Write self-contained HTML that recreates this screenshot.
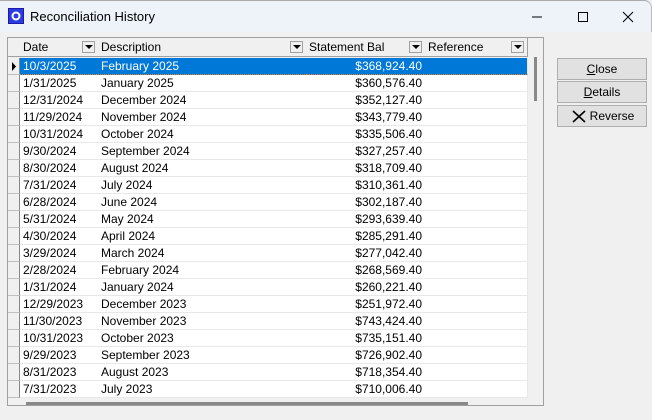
<!DOCTYPE html>
<html><head><style>
*{margin:0;padding:0;box-sizing:border-box}
body{width:652px;height:420px;overflow:hidden;background:#f0f0f0;font-family:"Liberation Sans",sans-serif;font-size:12px;position:relative}
.title{position:absolute;left:0;top:0;width:652px;height:32px;background:#eef2f9;border-top:1px solid #aaa;border-right:1px solid #bbb;border-radius:0 8px 0 0}
.title .t{position:absolute;left:30px;top:8px;font-size:13px;color:#000}
.grid{position:absolute;left:7px;top:37px;width:537px;height:369px;border:1px solid #a0a0a0;background:#f0f0f0;overflow:hidden}
.hdr{position:absolute;top:0;height:19px;background:#f0f0f0;border-right:1px solid #a0a0a0;border-bottom:1px solid #a0a0a0;padding-left:3px;line-height:18px}
.dd{position:absolute;right:3px;top:3px;width:13px;height:12px;border:1px solid #a0a0a0;background:#f0f0f0}
.dd:after{content:"";position:absolute;left:2px;top:3px;border-left:4px solid transparent;border-right:4px solid transparent;border-top:4px solid #000}
.row{position:absolute;left:0;height:17px;width:519px}
.ind{position:absolute;left:0;top:0;width:12px;height:17px;background:#f0f0f0;border-right:1px solid #888;border-bottom:1px solid #c0c0c0}
.c{position:absolute;top:0;height:17px;line-height:16px;background:#fff;border-right:1px solid #e8e8e8;border-bottom:1px solid #e8e8e8;padding-left:3px;white-space:nowrap}
.sel .c{background:#0078d7;color:#fff;border-bottom:1px dotted #f08020}
.r{text-align:right;padding-right:3px}
.btn{position:absolute;left:557px;width:90px;height:22px;background:#e1e1e1;border:1px solid #adadad;text-align:center;line-height:20px}
</style></head><body>
<div class="title">
<svg style="position:absolute;left:8px;top:7px" width="16" height="16"><rect x="0" y="0" width="16" height="16" fill="#1a1aa8"/><rect x="1" y="1" width="14" height="14" fill="#2b3be0"/><circle cx="8" cy="8" r="4.5" fill="#fff"/><circle cx="8" cy="8" r="2.5" fill="#2b3be0"/></svg>
<span class="t">Reconciliation History</span>
<svg style="position:absolute;left:531px;top:10px" width="110" height="12"><line x1="1" y1="6" x2="11" y2="6" stroke="#000"/><rect x="47.5" y="1.5" width="9" height="9" fill="none" stroke="#000"/><path d="M92 1L102 11M102 1L92 11" stroke="#000"/></svg>
</div>
<div class="grid">
<div class="hdr" style="left:0;width:13px"></div>
<div class="hdr" style="left:12px;width:79px">Date<span class="dd"></span></div>
<div class="hdr" style="left:90px;width:209px">Description<span class="dd"></span></div>
<div class="hdr" style="left:298px;width:120px">Statement Bal<span class="dd"></span></div>
<div class="hdr" style="left:417px;width:103px">Reference<span class="dd"></span></div>
<div id="rows"></div>
<div style="position:absolute;left:526px;top:19px;width:3px;height:44px;background:#888"></div>
<div style="position:absolute;left:18px;top:364px;width:442px;height:3px;background:#888"></div>
</div>
<div class="btn" style="top:58px"><u>C</u>lose</div>
<div class="btn" style="top:81px"><u>D</u>etails</div>
<div class="btn" style="top:105px"><svg style="position:absolute;left:14px;top:4px" width="14" height="13"><path d="M1 1L13 12M13 1L1 12" stroke="#000" stroke-width="1.6"/></svg><span style="padding-left:20px">Reverse</span></div>
<script>
var d=[["10/3/2025","February 2025","$368,924.40"],["1/31/2025","January 2025","$360,576.40"],["12/31/2024","December 2024","$352,127.40"],["11/29/2024","November 2024","$343,779.40"],["10/31/2024","October 2024","$335,506.40"],["9/30/2024","September 2024","$327,257.40"],["8/30/2024","August 2024","$318,709.40"],["7/31/2024","July 2024","$310,361.40"],["6/28/2024","June 2024","$302,187.40"],["5/31/2024","May 2024","$293,639.40"],["4/30/2024","April 2024","$285,291.40"],["3/29/2024","March 2024","$277,042.40"],["2/28/2024","February 2024","$268,569.40"],["1/31/2024","January 2024","$260,221.40"],["12/29/2023","December 2023","$251,972.40"],["11/30/2023","November 2023","$743,424.40"],["10/31/2023","October 2023","$735,151.40"],["9/29/2023","September 2023","$726,902.40"],["8/31/2023","August 2023","$718,354.40"],["7/31/2023","July 2023","$710,006.40"]];
var h="";d.forEach(function(r,i){h+='<div class="row'+(i==0?' sel':'')+'" style="top:'+(20+i*17)+'px"><div class="ind">'+(i==0?'<svg width="12" height="17"><path d="M4 4L8 8.5L4 13Z" fill="#000"/></svg>':'')+'</div><div class="c" style="left:12px;width:79px">'+r[0]+'</div><div class="c" style="left:90px;width:209px">'+r[1]+'</div><div class="c r" style="left:298px;width:120px">'+r[2]+'</div><div class="c" style="left:417px;width:103px"></div></div>'});
document.getElementById("rows").innerHTML=h;
</script>
</body></html>
